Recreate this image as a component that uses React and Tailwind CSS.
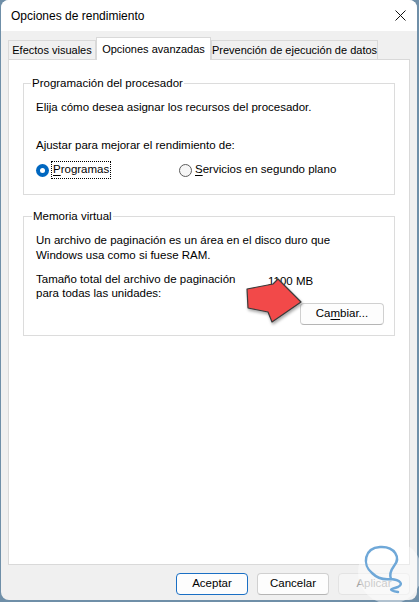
import React from 'react';

const font = { fontFamily: '"Liberation Sans", Arial, sans-serif' };

const Btn = ({ children, primary, disabled }) => (
  <div
    className={
      'w-[72px] h-[22px] rounded-[4px] flex items-center justify-center text-[11.5px] ' +
      (primary
        ? 'border border-[#1a6fc4] bg-[#fdfdfd] text-black'
        : disabled
        ? 'border border-[#e3e3e3] bg-[#f5f5f5] text-[#a2a2a2]'
        : 'border border-[#d0d0d0] border-b-[#b5b5b5] bg-[#fdfdfd] text-black')
    }
  >
    {children}
  </div>
);

const Tab = ({ children, w, active }) => (
  <div
    className={
      'flex items-center justify-center whitespace-nowrap text-[11px] border border-b-0 ' +
      (active
        ? 'h-[23px] bg-white border-[#d9d9d9] relative z-10 -mb-px'
        : 'h-[19px] bg-[#f0f0f0] border-[#d9d9d9]')
    }
    style={{ width: w }}
  >
    {children}
  </div>
);

export default function App() {
  return (
    <div className="w-[419px] h-[602px] bg-[#6f8fa8] relative overflow-hidden text-black" style={font}>
      <div className="ml-[1px] w-[416px] h-[600px] bg-[#f0f0f0] rounded-[8px] overflow-hidden flex flex-col">
        {/* title bar */}
        <div className="h-[31px] bg-white flex items-center justify-between pl-[10px] pr-[9px] shrink-0">
          <span className="text-[12px]">Opciones de rendimiento</span>
          <svg width="11" height="11" viewBox="0 0 11 11" className="mr-[2px]">
            <path d="M0.5 0.5 L10.5 10.5 M10.5 0.5 L0.5 10.5" stroke="#111" strokeWidth="1" />
          </svg>
        </div>

        <div className="px-[7px] pt-[6px] flex flex-col">
          {/* tabs */}
          <div className="flex items-end h-[22px]">
            <Tab w={88}>Efectos visuales</Tab>
            <Tab w={115} active>Opciones avanzadas</Tab>
            <Tab w={167}>Prevención de ejecución de datos</Tab>
          </div>

          {/* panel */}
          <div className="w-[402px] h-[506px] bg-white border border-[#d9d9d9] px-[14px] pt-[15px] text-[11.5px]">
            <fieldset className="border border-[#dcdcdc]">
              <legend className="ml-[7px] px-[1px] leading-[16px]">Programación del procesador</legend>
              <div className="pl-[12px] pb-[15px]">
                <p className="mt-[9px] leading-[15px]">Elija cómo desea asignar los recursos del procesador.</p>
                <p className="mt-[23px] leading-[15px]">Ajustar para mejorar el rendimiento de:</p>
                <div className="mt-[8px] flex items-center h-[18px]">
                  <div className="w-[143px] flex items-center">
                    <span className="w-[13px] h-[13px] rounded-full bg-[#0067c0] flex items-center justify-center shrink-0">
                      <span className="w-[5px] h-[5px] rounded-full bg-white" />
                    </span>
                    <span className="ml-[2px] h-[18px] px-[1px] flex items-center border border-dotted border-black">
                      <span><u className="underline-offset-2">P</u>rogramas</span>
                    </span>
                  </div>
                  <span className="w-[13px] h-[13px] rounded-full border border-[#5c5c5c] bg-[#f6f6f6] shrink-0" />
                  <span className="ml-[3px]"><u className="underline-offset-2">S</u>ervicios en segundo plano</span>
                </div>
              </div>
            </fieldset>

            <fieldset className="mt-[13px] border border-[#dcdcdc]">
              <legend className="ml-[8px] px-[1px] leading-[16px]">Memoria virtual</legend>
              <div className="pl-[12px] pr-[10px] pb-[10px]">
                <p className="mt-[9px] leading-[15px]">
                  Un archivo de paginación es un área en el disco duro que
                  <br />
                  Windows usa como si fuese RAM.
                </p>
                <div className="mt-[9px] flex">
                  <p className="w-[232px] leading-[14px]">
                    Tamaño total del archivo de paginación
                    <br />
                    para todas las unidades:
                  </p>
                  <span className="pt-[2px] leading-[14px]">1100 MB</span>
                </div>
                <div className="mt-[3px] flex justify-end">
                  <div className="w-[84px] h-[22px] rounded-[4px] border border-[#d0d0d0] border-b-[#b5b5b5] bg-[#fdfdfd] flex items-center justify-center">
                    <span>Ca<u className="underline-offset-2">m</u>biar...</span>
                  </div>
                </div>
              </div>
            </fieldset>
          </div>

          {/* bottom buttons */}
          <div className="mt-[8px] flex justify-end gap-[9px]">
            <Btn primary>Aceptar</Btn>
            <Btn>Cancelar</Btn>
            <Btn disabled>Aplicar</Btn>
          </div>
        </div>
      </div>

      {/* red arrow annotation */}
      <svg className="absolute left-0 top-0 pointer-events-none" width="419" height="602" viewBox="0 0 419 602">
        <defs>
          <filter id="sh" x="-20%" y="-20%" width="140%" height="140%">
            <feDropShadow dx="1" dy="2" stdDeviation="1.5" floodColor="#000" floodOpacity="0.35" />
          </filter>
        </defs>
        <polygon
          points="247,289 273,284 278,279 301,302 272,322 268,312 248,308"
          fill="#f24a4a"
          stroke="#3a3a3a"
          strokeWidth="1.2"
          strokeLinejoin="round"
          filter="url(#sh)"
        />
        {/* watermark */}
        <circle cx="390" cy="572" r="32" fill="#ffffff" opacity="0.45" />
        <path
          d="M372 573 C362 565 364 548 380 547 C395 546 401 558 394 566 C391 570 389 574 391 579 M372 573 C377 578 384 580 391 579 M391 579 C400 580 404 584 398 587 C392 589 386 590 398 592"
          fill="none"
          stroke="#6fa8d8"
          strokeWidth="2.5"
          strokeLinecap="round"
        />
      </svg>
    </div>
  );
}
